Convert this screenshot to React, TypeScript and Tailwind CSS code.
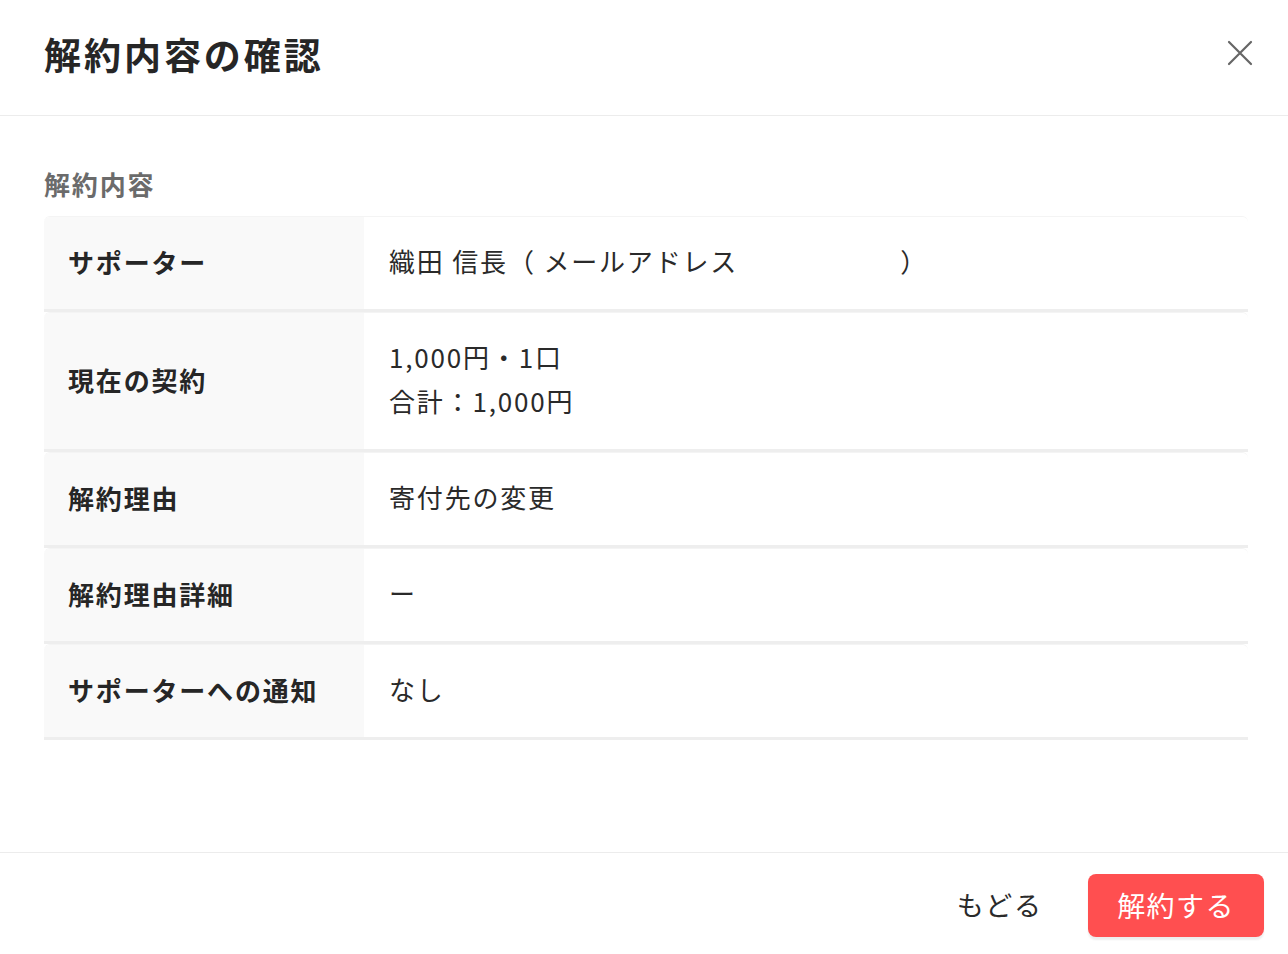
const rows: { label: string; value: React.ReactNode }[] = [
  {
    label: "サポーター",
    value: (
      <>
        織田 信長（ メールアドレス
        <span className="inline-block w-[162px]" />）
      </>
    ),
  },
  {
    label: "現在の契約",
    value: (
      <>
        1,000円・1口
        <br />
        合計：1,000円
      </>
    ),
  },
  { label: "解約理由", value: "寄付先の変更" },
  { label: "解約理由詳細", value: "ー" },
  { label: "サポーターへの通知", value: "なし" },
];

function CloseIcon() {
  return (
    <svg width="26" height="26" viewBox="0 0 26 26" fill="none">
      <path
        d="M2 2L24 24M24 2L2 24"
        stroke="#666"
        strokeWidth="2.2"
        strokeLinecap="round"
      />
    </svg>
  );
}

export default function App() {
  return (
    <div
      className="w-[1288px] h-[954px] bg-white flex flex-col text-[#262626]"
      style={{ fontFamily: '"Noto Sans CJK JP", "Noto Sans", sans-serif' }}
    >
      <header className="h-[116px] shrink-0 flex items-center justify-between pl-[44px] pr-[35px] pb-[6px] border-b border-[#ececec]">
        <h1 className="text-[37px] font-bold tracking-[0.08em] leading-none">
          解約内容の確認
        </h1>
        <button className="mb-[4px]">
          <CloseIcon />
        </button>
      </header>

      <main className="flex-1 pl-[44px] pr-[40px] pt-[50px]">
        <p className="text-[26px] font-bold text-[#6b6b6b] tracking-[0.07em] leading-[36px] mb-[14px]">
          解約内容
        </p>
        <div className="flex flex-col">
          {rows.map((r) => (
            <div
              key={r.label}
              className="flex border-t border-[#f4f4f4] border-b-[3px] border-b-[#eeeeee] rounded-t-md overflow-hidden"
            >
              <div className="w-[320px] shrink-0 bg-[#f9f9f9] pl-[24px] pb-[4px] flex items-center text-[26px] font-bold tracking-[0.07em]">
                {r.label}
              </div>
              <div className="flex-1 px-[25px] pt-[22px] pb-[26px] text-[26px] leading-[44px] tracking-[0.07em] text-[#2a2a2a]">
                {r.value}
              </div>
            </div>
          ))}
        </div>
      </main>

      <footer className="h-[102px] shrink-0 border-t border-[#ececec] flex items-center justify-end gap-[45px] pr-[24px] pt-[3px]">
        <button className="text-[27px] tracking-[0.07em] text-[#2a2a2a]">
          もどる
        </button>
        <button className="w-[176px] h-[63px] rounded-[8px] bg-[#ff4f50] text-white text-[28px] tracking-[0.05em] shadow-[0_3px_2px_rgba(0,0,0,0.07)]">
          解約する
        </button>
      </footer>
    </div>
  );
}
